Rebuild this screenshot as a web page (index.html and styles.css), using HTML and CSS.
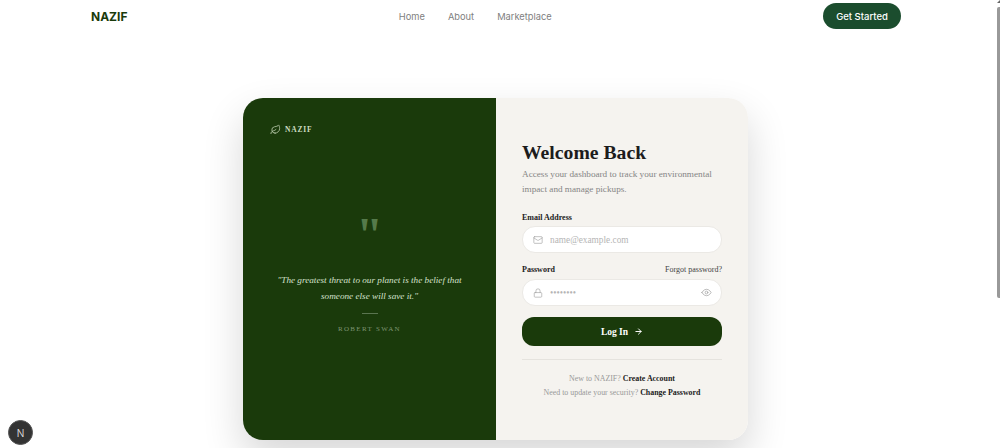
FILE: index.html
```html
<!DOCTYPE html>
<html lang="en">
<head>
    <meta charset="UTF-8">
    <meta name="viewport" content="width=device-width, initial-scale=1.0">
    <title>NAZIF - Log In</title>
    <link rel="stylesheet" href="styles.css">
</head>
<body>

    <nav class="navbar">
        <a class="nav-logo" href="#">NAZIF</a>
        <div class="nav-links">
            <a href="#">Home</a>
            <a href="#">About</a>
            <a href="#">Marketplace</a>
        </div>
        <a class="nav-cta" href="#">Get Started</a>
    </nav>

    <main class="page">
        <div class="card">
            <section class="card-left">
                <div class="brand">
                    <svg class="brand-icon" viewBox="0 0 24 24" fill="none" stroke="currentColor" stroke-width="1.6" stroke-linecap="round" stroke-linejoin="round">
                        <path d="M11 20A7 7 0 0 1 9.8 6.1C15.5 5 17 4.48 19 2c1 2 2 4.18 2 8 0 5.5-4.78 10-10 10Z"/>
                        <path d="M2 21c0-3 1.85-5.36 5.08-6C9.5 14.52 12 13 13 12"/>
                    </svg>
                    <span>NAZIF</span>
                </div>
                <div class="quote">
                    <div class="quote-mark">"</div>
                    <p class="quote-text">"The greatest threat to our planet is the belief that someone else will save it."</p>
                    <div class="quote-rule"></div>
                    <div class="quote-author">ROBERT SWAN</div>
                </div>
            </section>

            <section class="card-right">
                <h1>Welcome Back</h1>
                <p class="lead">Access your dashboard to track your environmental impact and manage pickups.</p>

                <form class="login-form">
                    <div class="field-head">
                        <label for="email">Email Address</label>
                    </div>
                    <div class="input-box">
                        <svg class="input-icon" viewBox="0 0 24 24" fill="none" stroke="currentColor" stroke-width="1.6" stroke-linecap="round" stroke-linejoin="round">
                            <rect x="2" y="4" width="20" height="16" rx="2"/>
                            <path d="m22 7-8.97 5.7a1.94 1.94 0 0 1-2.06 0L2 7"/>
                        </svg>
                        <input type="email" id="email" placeholder="name@example.com">
                    </div>

                    <div class="field-head field-head-pass">
                        <label for="password">Password</label>
                        <a href="#">Forgot password?</a>
                    </div>
                    <div class="input-box">
                        <svg class="input-icon" viewBox="0 0 24 24" fill="none" stroke="currentColor" stroke-width="1.6" stroke-linecap="round" stroke-linejoin="round">
                            <rect x="3" y="11" width="18" height="11" rx="2"/>
                            <path d="M7 11V7a5 5 0 0 1 10 0v4"/>
                        </svg>
                        <input type="password" id="password" placeholder="••••••••">
                        <svg class="input-eye" viewBox="0 0 24 24" fill="none" stroke="currentColor" stroke-width="1.6" stroke-linecap="round" stroke-linejoin="round">
                            <path d="M2 12s3.5-7 10-7 10 7 10 7-3.5 7-10 7-10-7-10-7Z"/>
                            <circle cx="12" cy="12" r="3"/>
                        </svg>
                    </div>

                    <button type="button" class="login-btn">
                        Log In
                        <svg viewBox="0 0 24 24" fill="none" stroke="currentColor" stroke-width="2.6" stroke-linecap="round" stroke-linejoin="round">
                            <path d="M5 12h14"/>
                            <path d="m12 5 7 7-7 7"/>
                        </svg>
                    </button>
                </form>

                <div class="card-foot">
                    <p>New to NAZIF? <a href="#">Create Account</a></p>
                    <p>Need to update your security? <a href="#">Change Password</a></p>
                </div>
            </section>
        </div>
    </main>

    <div class="next-badge">N</div>
    <div class="scroll-thumb"></div>

</body>
</html>
```

FILE: styles.css
```css
/* Base */
html, body {
    height: 100%;
    overflow: hidden;
}

body {
    margin: 0;
    background-color: #fff;
    font-family: Inter, "Noto Sans", sans-serif;
}

a {
    text-decoration: none;
    color: inherit;
}

/* Navbar */
.navbar {
    height: 32px;
    padding: 0 99px 0 91px;
    display: flex;
    align-items: center;
    justify-content: space-between;
}

.nav-logo {
    font-size: 12px;
    font-weight: 700;
    color: #1a3a0b;
}

.nav-links {
    display: flex;
    gap: 23px;
    font-size: 9.3px;
    color: #808080;
}

.nav-cta {
    width: 78px;
    height: 26px;
    border-radius: 13px;
    background-color: #1b4d2e;
    color: #fff;
    font-size: 9.5px;
    font-weight: 500;
    display: flex;
    align-items: center;
    justify-content: center;
}

/* Card */
.page {
    padding-top: 66px;
    display: flex;
    justify-content: center;
    padding-right: 9px;
}

.card {
    width: 505px;
    height: 342px;
    display: flex;
    border-radius: 20px;
    overflow: hidden;
    box-shadow: 0 18px 40px rgba(0, 0, 0, 0.16);
    font-family: "Liberation Serif", "Times New Roman", serif;
}

.card-left {
    width: 253px;
    box-sizing: border-box;
    padding: 26px 27px;
    background-color: #1a3a0b;
    color: #d9e4cf;
}

.brand {
    display: flex;
    align-items: center;
    gap: 4px;
    font-size: 7.5px;
    font-weight: 700;
    letter-spacing: 0.8px;
    color: #cddcc0;
}

.brand-icon {
    width: 11px;
    height: 11px;
}

.quote {
    margin-top: 78px;
    text-align: center;
}

.quote-mark {
    height: 32px;
    font-size: 48px;
    line-height: 44px;
    font-weight: 700;
    color: #557a4a;
}

.quote-text {
    margin: 28px 0 0;
    font-size: 9.2px;
    line-height: 15.5px;
    font-style: italic;
    color: #d5e0cb;
}

.quote-rule {
    width: 16px;
    height: 1px;
    margin: 9px auto 0;
    background-color: #5a7550;
}

.quote-author {
    margin-top: 11px;
    font-size: 7px;
    letter-spacing: 1.3px;
    color: #7d9472;
}

.card-right {
    flex: 1;
    box-sizing: border-box;
    padding: 42px 26px 0;
    background-color: #f5f3ef;
}

h1 {
    margin: 0;
    font-size: 19.7px;
    line-height: 24px;
    font-weight: 700;
    color: #1c1c1c;
}

.lead {
    margin: 3px 0 0;
    font-size: 9.2px;
    line-height: 15px;
    color: #858585;
}

/* Form */
.login-form {
    margin-top: 15px;
}

.field-head {
    display: flex;
    justify-content: space-between;
    align-items: center;
    height: 10px;
    margin-bottom: 4px;
    font-size: 8px;
    color: #444;
}

.field-head label {
    font-weight: 700;
    color: #222;
}

.field-head-pass {
    margin-top: 11px;
    margin-bottom: 5px;
}

.input-box {
    height: 27px;
    box-sizing: border-box;
    padding: 0 9px 0 10px;
    display: flex;
    align-items: center;
    background-color: #fff;
    border: 1px solid #ebe9e5;
    border-radius: 13px;
    color: #a3a3a3;
}

.input-icon {
    width: 10px;
    height: 10px;
    flex: none;
}

.input-eye {
    width: 11px;
    height: 11px;
    flex: none;
}

.input-box input {
    flex: 1;
    min-width: 0;
    margin-left: 7px;
    padding: 0;
    border: 0;
    outline: 0;
    background: none;
    font-family: inherit;
    font-size: 9.3px;
}

.input-box input::placeholder {
    color: #b5b5b5;
}

.login-btn {
    width: 100%;
    height: 29px;
    margin-top: 11px;
    display: flex;
    align-items: center;
    justify-content: center;
    gap: 6px;
    border: 0;
    border-radius: 12px;
    background-color: #1a3a0b;
    color: #fff;
    font-family: inherit;
    font-size: 9.5px;
    font-weight: 700;
}

.login-btn svg {
    width: 9px;
    height: 9px;
}

.card-foot {
    margin-top: 13px;
    padding-top: 12px;
    border-top: 1px solid #e5e3de;
    text-align: center;
    font-size: 7.9px;
    line-height: 14px;
    color: #999;
}

.card-foot p {
    margin: 0;
}

.card-foot a {
    font-weight: 700;
    color: #1c1c1c;
}

/* Overlays */
.next-badge {
    position: fixed;
    left: 8px;
    bottom: 3px;
    width: 25px;
    height: 25px;
    border-radius: 50%;
    background-color: #333;
    border: 1px solid #555;
    box-sizing: border-box;
    color: #eee;
    font-size: 10px;
    font-weight: 300;
    display: flex;
    align-items: center;
    justify-content: center;
}

.scroll-thumb {
    position: fixed;
    top: 7px;
    right: 0;
    width: 3px;
    height: 291px;
    border-radius: 2px 0 0 2px;
    background-color: #999;
}

.scroll-thumb::before {
    content: "";
    position: absolute;
    top: -7px;
    right: 0;
    border-left: 3px solid transparent;
    border-bottom: 3px solid #666;
}
```
